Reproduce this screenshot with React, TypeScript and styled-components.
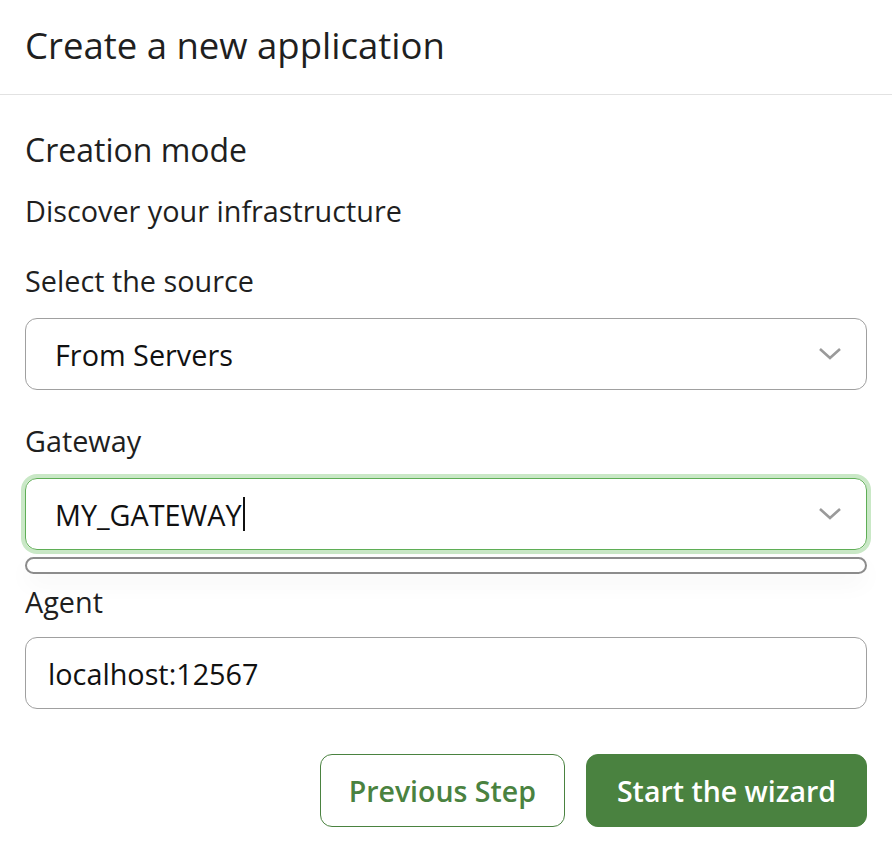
import * as React from "react";
import styled, { createGlobalStyle } from "styled-components";

const GREEN = "#4a8240";

const GlobalStyle = createGlobalStyle`
  body {
    margin: 0;
    background: #ffffff;
    font-family: "Open Sans", "Noto Sans", sans-serif;
    color: #1f1f1f;
  }
`;

const Dialog = styled.div`
  width: 892px;
  min-height: 854px;
  background: #fff;
`;

const Header = styled.header`
  height: 94px;
  padding: 0 25px;
  display: flex;
  align-items: center;
  border-bottom: 1px solid #e2e2e2;
`;

const Title = styled.h1`
  margin: 0 0 4px;
  font-size: 36.5px;
  font-weight: 400;
`;

const Body = styled.section`
  padding: 35px 25px 0;
  display: flex;
  flex-direction: column;
`;

const SectionTitle = styled.h2`
  margin: 0;
  font-size: 32px;
  font-weight: 400;
  line-height: 40px;
`;

const Text = styled.p`
  margin: 21px 0 0;
  font-size: 28.8px;
  line-height: 40px;
`;

const Label = styled.label<{ $top?: number; $bottom?: number }>`
  display: block;
  margin-top: ${(p) => p.$top ?? 31}px;
  margin-bottom: ${(p) => p.$bottom ?? 17}px;
  font-size: 28.8px;
  line-height: 40px;
`;

const Field = styled.div<{ $focused?: boolean }>`
  height: 72px;
  box-sizing: border-box;
  border: 1px solid ${(p) => (p.$focused ? "#5fae56" : "#a0a0a0")};
  border-radius: 12px;
  display: flex;
  align-items: center;
  padding: 0 24px 0 29px;
  font-size: 28.8px;
  color: #111;
  box-shadow: ${(p) => (p.$focused ? "0 0 0 4px #c9e8c6" : "none")};
`;

const Value = styled.span`
  flex: 1;
  display: flex;
  align-items: center;
`;

const Caret = styled.span`
  display: inline-block;
  width: 2px;
  height: 34px;
  background: #111;
  margin-left: 1px;
`;

const InputField = styled(Field)`
  padding-left: 22px;
`;

const Listbox = styled.div`
  margin-top: 7px;
  height: 17px;
  box-sizing: border-box;
  border: 2px solid #8c8c8c;
  border-radius: 9px;
  box-shadow: 0 10px 24px rgba(0, 0, 0, 0.04);
`;

const Actions = styled.div`
  margin-top: 45px;
  display: flex;
  justify-content: flex-end;
  gap: 21px;
`;

const Button = styled.button<{ $primary?: boolean }>`
  height: 73px;
  padding: 0 ${(p) => (p.$primary ? 30 : 28)}px;
  border-radius: 12px;
  font-family: "Open Sans", sans-serif;
  font-size: 28.5px;
  font-weight: 600;
  border: 1px solid ${GREEN};
  background: ${(p) => (p.$primary ? GREEN : "#fff")};
  color: ${(p) => (p.$primary ? "#fff" : GREEN)};
`;

const Chevron = () => (
  <svg width="24" height="14" viewBox="0 0 24 14">
    <path d="M2 2 L12 11 L22 2" fill="none" stroke="#9a9a9a" strokeWidth="2.6" />
  </svg>
);

export default function App() {
  return (
    <Dialog>
      <GlobalStyle />
      <Header>
        <Title>Create a new application</Title>
      </Header>
      <Body>
        <SectionTitle>Creation mode</SectionTitle>
        <Text>Discover your infrastructure</Text>
        <Label $top={30}>Select the source</Label>
        <Field>
          <Value>From Servers</Value>
          <Chevron />
        </Field>
        <Label>Gateway</Label>
        <Field $focused>
          <Value>
            MY_GATEWAY
            <Caret />
          </Value>
          <Chevron />
        </Field>
        <Listbox />
        <Label $top={8} $bottom={15}>
          Agent
        </Label>
        <InputField>
          <Value>localhost:12567</Value>
        </InputField>
        <Actions>
          <Button>Previous Step</Button>
          <Button $primary>Start the wizard</Button>
        </Actions>
      </Body>
    </Dialog>
  );
}
